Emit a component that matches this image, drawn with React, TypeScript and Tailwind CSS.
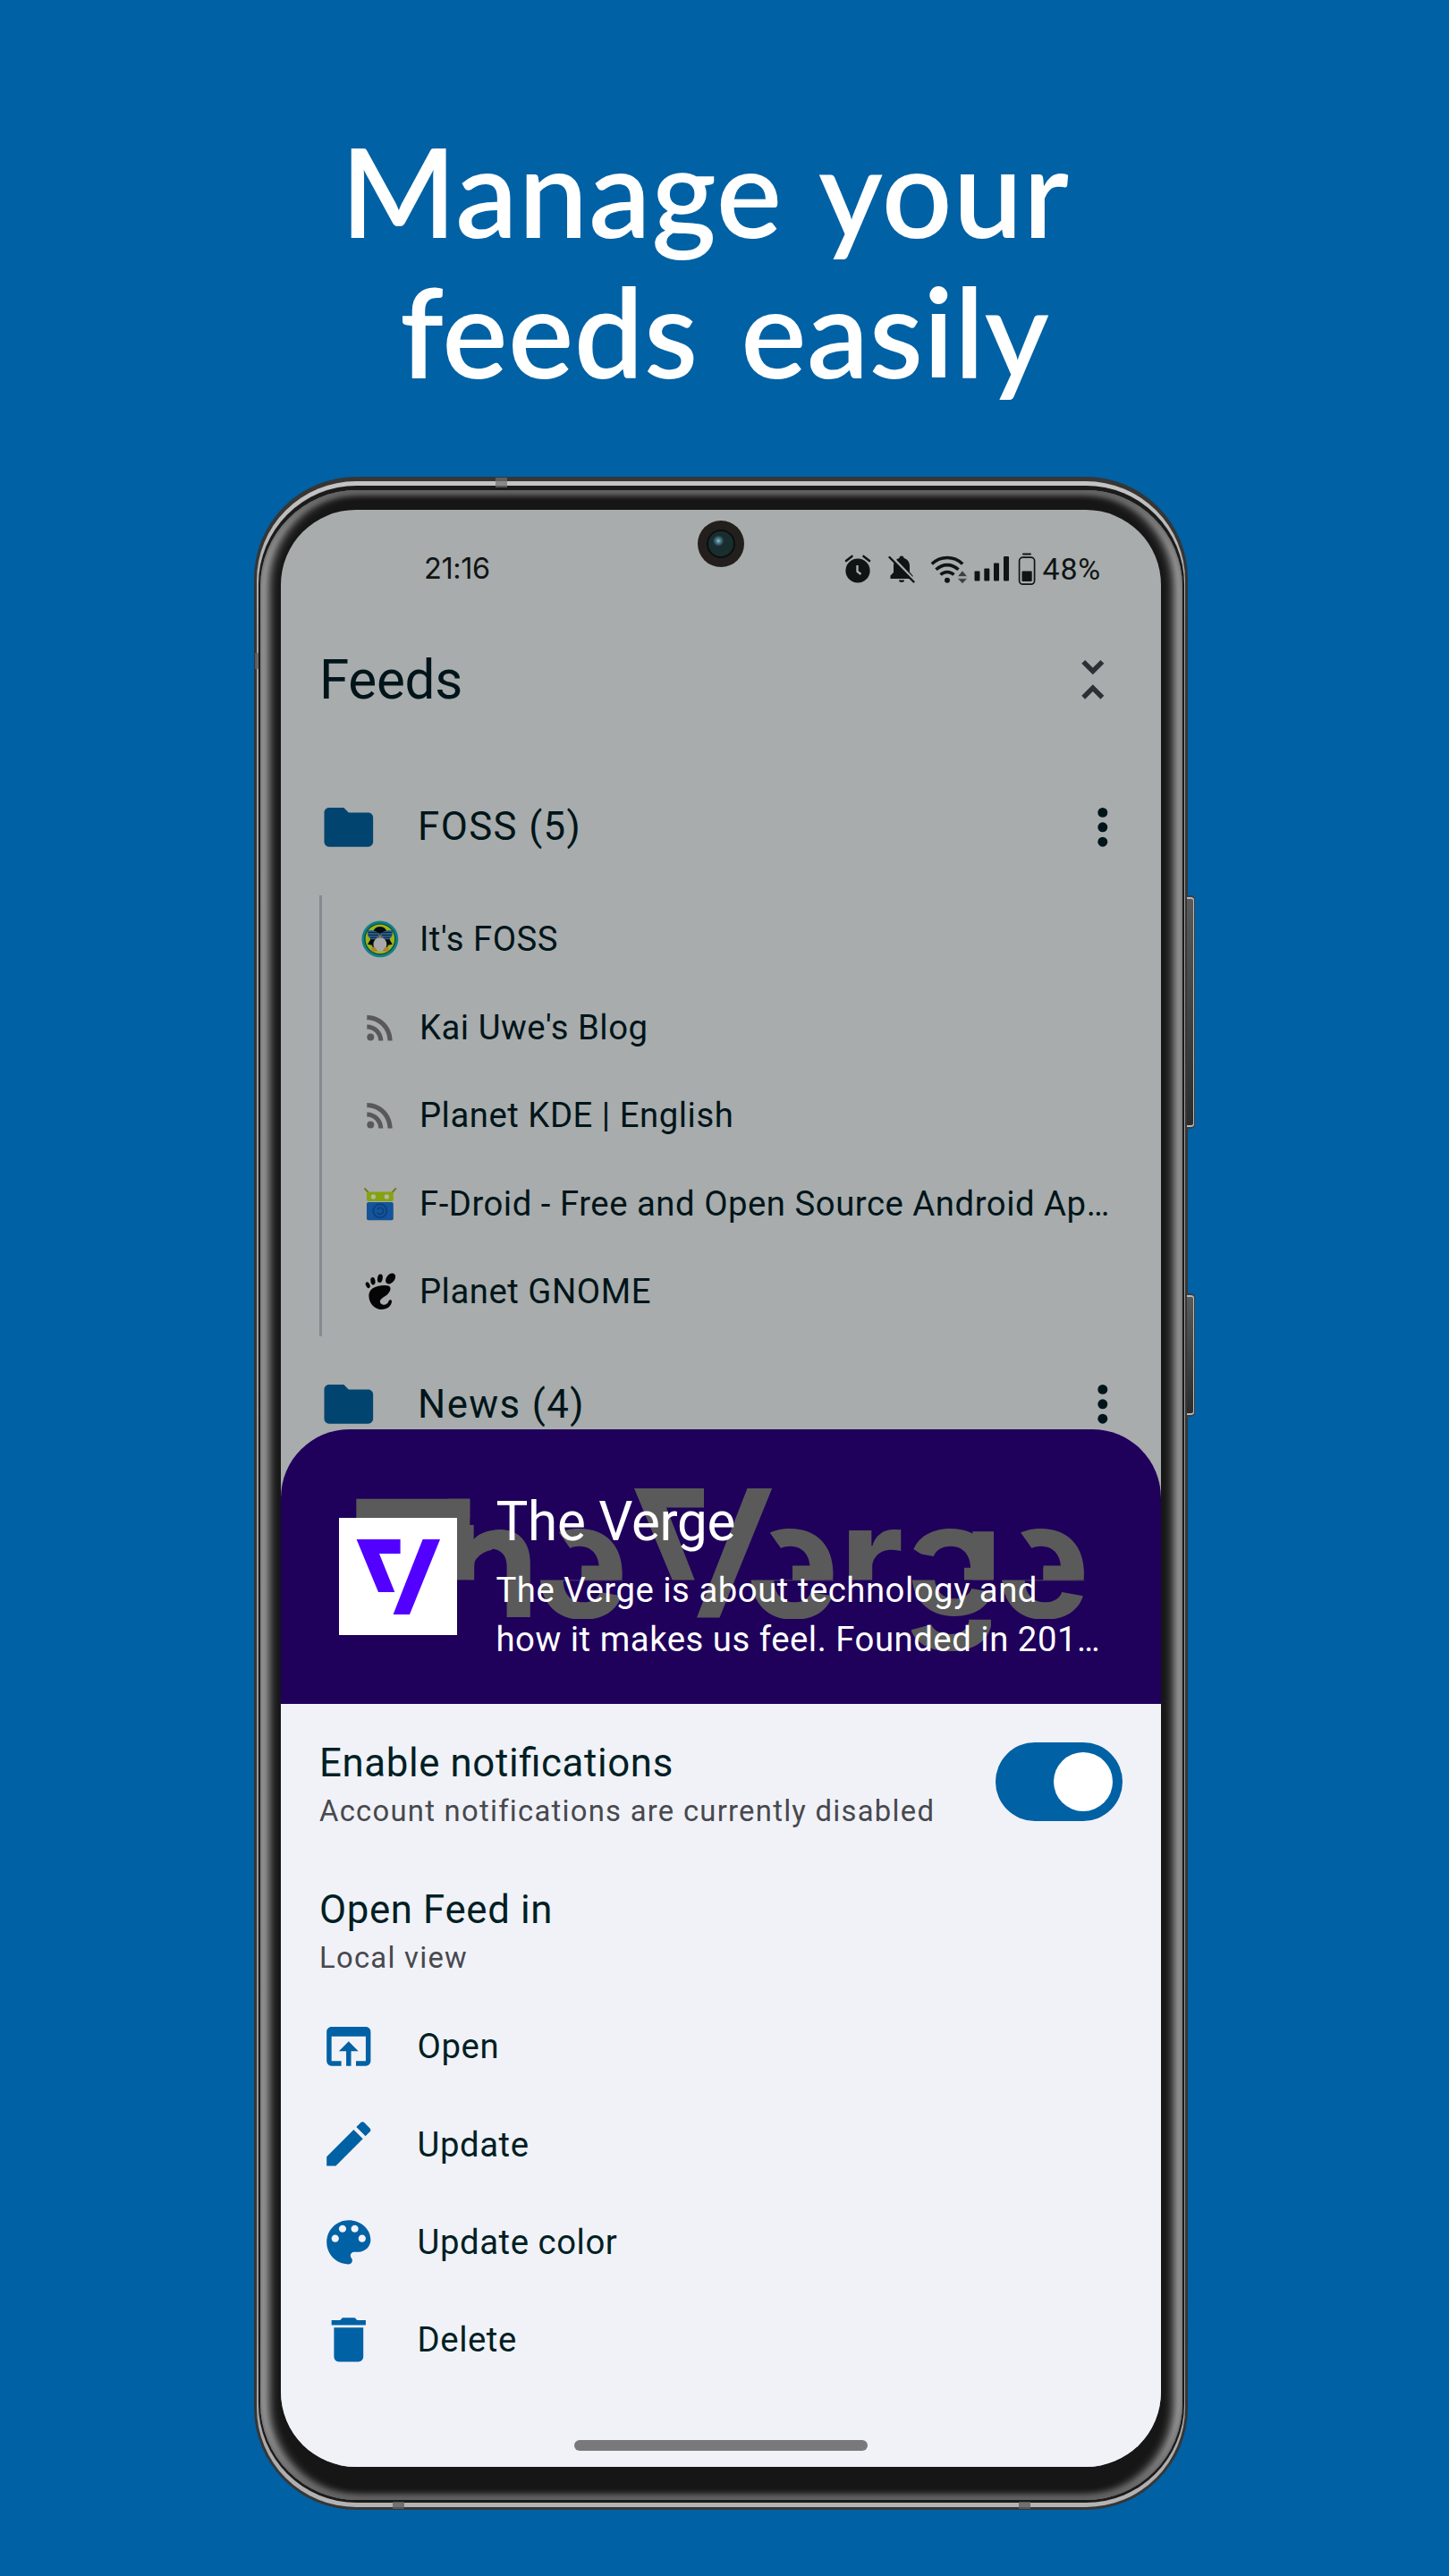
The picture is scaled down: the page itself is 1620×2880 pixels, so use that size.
import type { ReactNode } from "react";

const INK_DIM = "text-[#00151a]";

function Svg({ size, children, className = "" }: { size: number; children: ReactNode; className?: string }) {
  return (
    <svg width={size} height={size} viewBox="0 0 24 24" fill="currentColor" className={`shrink-0 ${className}`}>
      {children}
    </svg>
  );
}

function MoreVert() {
  return (
    <Svg size={65.6} className="text-[#00151a]">
      <circle cx="12" cy="6" r="2" />
      <circle cx="12" cy="12" r="2" />
      <circle cx="12" cy="18" r="2" />
    </Svg>
  );
}

function FolderRow({ title }: { title: string }) {
  return (
    <div className="flex h-[153px] shrink-0 items-center pl-[43px] pr-[32px]">
      <Svg size={65.6} className="text-[#00446f]">
        <path d="M10 4H4c-1.1 0-1.99.9-1.99 2L2 18c0 1.1.9 2 2 2h16c1.1 0 2-.9 2-2V8c0-1.1-.9-2-2-2h-8l-2-2z" />
      </Svg>
      <span className={`ml-[44.5px] flex-1 pt-[1px] text-[43.75px] leading-none tracking-[1.4px] ${INK_DIM}`}>{title}</span>
      <MoreVert />
    </div>
  );
}

function RssIcon() {
  return (
    <Svg size={43.75} className="text-[#595959]">
      <circle cx="6.18" cy="17.82" r="2.18" />
      <path d="M4 4.44v2.83c7.03 0 12.73 5.7 12.73 12.73h2.83c0-8.59-6.97-15.56-15.56-15.56zm0 5.66v2.83c3.9 0 7.07 3.17 7.07 7.07h2.83c0-5.47-4.43-9.9-9.9-9.9z" />
    </Svg>
  );
}

function ItsFossIcon() {
  return (
    <svg width="43.75" height="43.75" viewBox="0 0 44 44" className="shrink-0">
      <circle cx="22" cy="22" r="20.5" fill="#117f86" />
      <circle cx="22" cy="22" r="17.6" fill="#0b4038" />
      <circle cx="22" cy="22" r="16.4" fill="#9ab51b" />
      <path d="M22 8c6 0 8 5 9 10 1.500 5 4 8 5 10l-5 1-2 6H15l-2-6-5-1c1-2 3.500-5 5-10 1-5 3-10 9-10z" fill="#080b0e" />
      <path d="M8 12.500c5-1 10 .5 14 3.500 4-3 9-4.500 14-3.500 1 6-2 10-6.500 10-4 0-6-2-7.500-5-1.500 3-3.500 5-7.500 5C10 22.500 7 18.500 8 12.500z" fill="#2c5f8c" />
      <path d="M9 14.500h11M9 17.500h11M11 20.300h7M24 14.500h11M24 17.500h11M26 20.300h7" stroke="#0c2238" strokeWidth="1" />
      <ellipse cx="22" cy="28" rx="7.500" ry="8" fill="#a9a9ab" />
      <path d="M20 18h4l-2 3.500z" fill="#b0742a" />
      <circle cx="15" cy="33.500" r="2.700" fill="#b9802f" />
      <circle cx="29" cy="33.500" r="2.700" fill="#b9802f" />
    </svg>
  );
}

function FDroidIcon() {
  return (
    <svg width="43.75" height="43.75" viewBox="0 0 44 44" className="shrink-0">
      <rect x="1" y="1" width="42" height="42" fill="#aaabab" />
      <path d="M5 5l4 4.500M39.500 5l-4 4.500" stroke="#68801d" strokeWidth="2" strokeLinecap="round" />
      <rect x="7" y="8.500" width="30" height="10.500" rx="2" fill="#84a30f" />
      <circle cx="14.500" cy="14" r="2.600" fill="#b4b8a6" />
      <circle cx="29.500" cy="14" r="2.600" fill="#b4b8a6" />
      <rect x="7" y="20" width="30" height="20.500" rx="2" fill="#14549a" />
      <circle cx="22" cy="30" r="7.600" fill="none" stroke="#0d3f7a" strokeWidth="1.700" />
      <path d="M19 28.200a3.600 3.600 0 1 1 0 3.600" fill="none" stroke="#0d3f7a" strokeWidth="1.700" />
    </svg>
  );
}

function GnomeIcon() {
  return (
    <svg width="43.75" height="43.75" viewBox="0 0 44 44" className="shrink-0" fill="#050505">
      <ellipse cx="33.800" cy="7.500" rx="4.600" ry="6.800" transform="rotate(38 33.800 7.500)" />
      <ellipse cx="22" cy="7.200" rx="2.900" ry="4.800" transform="rotate(10 22 7.200)" />
      <ellipse cx="14" cy="10.200" rx="2.600" ry="4.300" transform="rotate(-8 14 10.200)" />
      <ellipse cx="8.300" cy="14.800" rx="2.200" ry="3.600" transform="rotate(-24 8.300 14.800)" />
      <path d="M33.500 17.500c-1-3-8-3-14-1.500C12.500 17.500 9 22 9.500 28c.6 8 6.500 14.300 14 14.300 6.500 0 11.500-3.800 11.700-9.300.1-2-2.700-2.300-3.400-.4-.8 2.800-3.200 4.600-6 4.300-3-.3-4.700-3.200-3.300-5.500 1.300-2 4-3 6.500-5 3-2.500 5.400-6 4.500-8.900z" />
    </svg>
  );
}

const feeds: { name: string; icon: ReactNode }[] = [
  { name: "It's FOSS", icon: <ItsFossIcon /> },
  { name: "Kai Uwe's Blog", icon: <RssIcon /> },
  { name: "Planet KDE | English", icon: <RssIcon /> },
  { name: "F-Droid - Free and Open Source Android Ap…", icon: <FDroidIcon /> },
  { name: "Planet GNOME", icon: <GnomeIcon /> },
];

function StatusBar() {
  return (
    <div className="flex h-[132px] shrink-0 items-center pl-[160px] text-[#101414]">
      <span className="w-[470px] font-[Inter] text-[32.5px] leading-none tracking-[-0.4px]">21:16</span>
      <svg width="30" height="32" viewBox="0 0 30 32" className="shrink-0" fill="currentColor">
        <circle cx="15" cy="18" r="13.600" />
        <path d="M2 7l6.500-5M28 7l-6.500-5" stroke="currentColor" strokeWidth="2.600" strokeLinecap="round" />
        <path d="M14.500 12v7l4 3" stroke="#a8acac" strokeWidth="2.400" fill="none" />
      </svg>
      <svg width="30" height="32" viewBox="0 0 30 32" className="ml-[19px] shrink-0" fill="currentColor">
        <path d="M12.500 4a2.500 2.500 0 0 1 5 0c4.300 1.200 6.500 4.500 6.500 9v6.500l3.500 4V27H2.500v-3.500L6 20v-7c0-4.500 2.200-7.800 6.500-9z" />
        <path d="M12 28.500h6a3 2.500 0 0 1-6 0z" />
        <path d="M2.500 1.500l27.500 28.500" stroke="#a8acac" strokeWidth="3.500" />
        <path d="M1.500 3l27 27.500" stroke="currentColor" strokeWidth="2.400" strokeLinecap="round" />
      </svg>
      <svg width="42" height="33" viewBox="0 0 42 33" className="ml-[17px] shrink-0" fill="none" stroke="currentColor">
        <path d="M1.800 10.500c10-9.300 24.500-9.300 34.400 0M6.500 16.800c7.500-6.900 17.500-6.900 25 0" strokeWidth="3.600" />
        <path d="M11.500 22.500c4.500-4.100 10.500-4.100 15 0" strokeWidth="3.600" />
        <circle cx="19" cy="28.800" r="3" fill="currentColor" stroke="none" />
        <path d="M30.500 24.500l5.500-6.500 5.500 6.500zM30.500 26.800l5.500 5.700 5.500-5.700z" fill="#3c4040" stroke="#a8acac" strokeWidth="0.600" />
      </svg>
      <svg width="40" height="30" viewBox="0 0 40 30" className="ml-[7px] shrink-0" fill="currentColor">
        <rect x="0.500" y="17.500" width="6" height="11" rx="1" />
        <rect x="11.300" y="14.500" width="6" height="14" rx="1" />
        <rect x="22" y="8.500" width="6" height="20" rx="1" />
        <rect x="33" y="1" width="6" height="27.500" rx="1" />
      </svg>
      <svg width="20" height="37" viewBox="0 0 20 37" className="ml-[9px] shrink-0" fill="currentColor">
        <rect x="5" y="0.500" width="10" height="2" rx="1" />
        <rect x="1.600" y="5.200" width="17" height="30" rx="4" fill="none" stroke="currentColor" strokeWidth="1.700" />
        <rect x="4.500" y="20.500" width="11.200" height="11.500" rx="1" />
      </svg>
      <span className="ml-[7.5px] text-[34px] leading-none tracking-[0.8px]">48%</span>
    </div>
  );
}

/** Letter whose upper half is turned upside down, as in the wordmark. */
function SplitE({ x }: { x: number }) {
  return (
    <g transform={`translate(${x} 0)`}>
      <g clipPath="url(#upperE)">
        <text transform="translate(99.5 1711) rotate(180)">e</text>
      </g>
      <g clipPath="url(#lower)">
        <text x={-6.5} y={1809}>e</text>
      </g>
      <rect x={47} y="1750.700" width="35" height="16" />
    </g>
  );
}

function Wordmark() {
  return (
    <svg
      aria-hidden="true"
      viewBox="314 1598.300 984 306.700"
      className="absolute inset-0 h-full w-full font-[Inter] text-[178px] font-bold"
      fill="#5a5a5a"
    >
      <clipPath id="upper"><rect x="314" y="1598" width="984" height="168.700" /></clipPath>
      <clipPath id="upperE"><path d="M12 1700L24 1717L35.300 1733L47 1750.700V1766.700H110V1700z" /></clipPath>
      <clipPath id="upperG"><path d="M1000 1690H1115V1766.700H1078V1745H1041L1021 1732H1000z" /></clipPath>
      <clipPath id="lower"><rect x="-20" y="1766.700" width="130" height="43.500" /></clipPath>
      <clipPath id="lowerG"><rect x="1000" y="1766.700" width="120" height="41" /></clipPath>
      <clipPath id="tail"><rect x="1000" y="1811" width="108" height="60" /></clipPath>
      <clipPath id="arch"><path d="M525 1705V1766.700H560V1820H600V1705z" /></clipPath>
      <rect x="398.300" y="1676" width="127" height="22" />
      <rect x="501" y="1676" width="24.300" height="90.700" />
      <g clipPath="url(#arch)">
        <text x="493" y="1808.700">h</text>
      </g>
      <path d="M525 1727Q534 1713 550 1711.500V1733Q527 1737 525 1766.700z" />
      <SplitE x={603.3} />
      <path d="M709 1664.300H787V1685.700H745L776.700 1766.700H751.700z" />
      <path d="M835.500 1664.300H863.200L804.500 1808.700H779z" />
      <SplitE x={839} />
      <g clipPath="url(#upper)">
        <text x="938" y="1808.700">r</text>
      </g>
      <g clipPath="url(#upperG)">
        <text transform="translate(1118 1711) rotate(180)">e</text>
      </g>
      <rect x="1087.400" y="1712.500" width="23.600" height="54.200" />
      <g clipPath="url(#lowerG)">
        <text x="1012" y="1805">e</text>
      </g>
      <g clipPath="url(#tail)">
        <text x="1008" y="1808">g</text>
      </g>
      <SplitE x={1119.5} />
    </svg>
  );
}

function SheetHeader() {
  return (
    <div className="relative flex h-[306.7px] shrink-0 items-center bg-[#1f005b] pl-[65px] text-white">
      <Wordmark />
      <div className="relative mt-[22px] size-[131.5px] shrink-0 bg-white">
        <svg viewBox="0 0 131.500 131.500" className="size-full" fill="#5200ff">
          <path d="M19.600 24H68.600V40H45L62.300 83H44z" />
          <path d="M93.600 24H113L79 108H60.600z" />
        </svg>
      </div>
      <div className="relative ml-[44px] mt-[10px] flex flex-col">
        <span className="text-[60.2px] leading-[99px] tracking-[-0.3px]">The Verge</span>
        <span className="whitespace-nowrap text-[38.3px] leading-[54.7px] tracking-[0.52px]">
          The Verge is about technology and
          <br />
          how it makes us feel. Founded in 201…
        </span>
      </div>
    </div>
  );
}

function Setting({ title, detail }: { title: string; detail: string }) {
  return (
    <div className="flex flex-col whitespace-nowrap">
      <span className="pt-[1.5px] text-[43.75px] leading-[64.1px] tracking-[0.64px] text-[#001f24] [font-feature-settings:'liga'_1]">
        {title}
      </span>
      <span className="pt-[1.5px] text-[32.8px] leading-[42.25px] tracking-[1.26px] text-[#47494e]">{detail}</span>
    </div>
  );
}

const actions = [
  {
    label: "Open",
    path: "M19 4H5c-1.110 0-2 .9-2 2v12c0 1.100.89 2 2 2h4v-2H5V8h14v10h-4v2h4c1.100 0 2-.9 2-2V6c0-1.100-.89-2-2-2zm-7 6l-4 4h3v6h2v-6h3l-4-4z",
  },
  {
    label: "Update",
    path: "M3 17.250V21h3.750L17.810 9.940l-3.750-3.750L3 17.250zM20.710 7.040c.39-.39.39-1.020 0-1.410l-2.340-2.340c-.39-.39-1.020-.39-1.410 0l-1.830 1.830 3.750 3.750 1.830-1.830z",
  },
  {
    label: "Update color",
    path: "M12 3c-4.970 0-9 4.030-9 9s4.030 9 9 9c.83 0 1.500-.67 1.500-1.500 0-.39-.15-.74-.39-1.010-.23-.26-.38-.61-.38-.99 0-.83.67-1.500 1.500-1.500H16c2.760 0 5-2.240 5-5 0-4.420-4.030-8-9-8zm-5.500 9c-.83 0-1.500-.67-1.500-1.500S5.670 9 6.500 9 8 9.670 8 10.500 7.330 12 6.500 12zm3-4C8.670 8 8 7.330 8 6.500S8.670 5 9.500 5s1.500.67 1.500 1.500S10.330 8 9.500 8zm5 0c-.83 0-1.500-.67-1.500-1.500S13.670 5 14.500 5s1.500.67 1.500 1.500S15.330 8 14.500 8zm3 4c-.83 0-1.500-.67-1.500-1.500S16.670 9 17.500 9s1.500.67 1.500 1.500-.67 1.500-1.500 1.500z",
  },
  {
    label: "Delete",
    path: "M6 19c0 1.100.9 2 2 2h8c1.100 0 2-.9 2-2V7H6v12zM19 4h-3.500l-1-1h-5l-1 1H5v2h14V4z",
  },
];

function BottomSheet() {
  return (
    <div className="absolute inset-x-0 bottom-0 flex h-[1159.7px] flex-col overflow-hidden rounded-t-[76.5px] bg-[#f1f2f8]">
      <SheetHeader />
      <div className="mt-[32.3px] flex items-center justify-between px-[43px]">
        <Setting title="Enable notifications" detail="Account notifications are currently disabled" />
        <div className="flex h-[87.5px] w-[142.2px] items-center justify-end rounded-full bg-[#0061a4] pr-[11px]">
          <div className="size-[65.6px] rounded-full bg-white" />
        </div>
      </div>
      <div className="mt-[54.7px] px-[43px]">
        <Setting title="Open Feed in" detail="Local view" />
      </div>
      <div className="mt-[22.4px] flex flex-col">
        {actions.map((a) => (
          <div key={a.label} className="flex h-[109.4px] items-center px-[43px]">
            <Svg size={65.6} className="text-[#0061a4]">
              <path d={a.path} />
            </Svg>
            <span className="ml-[44px] pt-[1px] text-[38.3px] leading-none tracking-[0.55px] text-[#001f24]">{a.label}</span>
          </div>
        ))}
      </div>
      <div className="mx-auto mt-[57.5px] h-[11.5px] w-[328px] shrink-0 rounded-full bg-[#79797c]" />
    </div>
  );
}

function Screen() {
  return (
    <div className="relative flex h-full flex-col overflow-hidden rounded-[84px] bg-[#a8acac]">
      <StatusBar />
      <div className="absolute left-[466px] top-[12px] flex size-[52px] items-center justify-center rounded-full bg-[#231f1d]">
        <div className="size-[32px] rounded-full border-2 border-[#0d0e0f] bg-[radial-gradient(circle_at_40%_38%,#8fc4d8_0,#4d7f90_10%,#1a2c30_26%,#17302d_70%,#111_100%)]" />
      </div>
      <div className="flex h-[116px] shrink-0 items-center justify-between px-[43px]">
        <span className={`pt-[2px] text-[60.2px] leading-none tracking-[-0.3px] ${INK_DIM}`}>Feeds</span>
        <Svg size={65.6} className="text-[#2c3036]">
          <path d="M7.410 18.590L8.830 20 12 16.830 15.170 20l1.410-1.410L12 14l-4.590 4.590zm9.180-13.180L15.170 4 12 7.170 8.830 4 7.410 5.410 12 10l4.590-4.590z" />
        </Svg>
      </div>
      <div className="mt-[30px] shrink-0">
        <FolderRow title="FOSS (5)" />
      </div>
      <div className="ml-[43px] flex shrink-0 flex-col border-l-[3px] border-[#868a90]">
        {feeds.map((f) => (
          <div key={f.name} className="flex h-[98.5px] items-center pl-[43.2px]">
            {f.icon}
            <span className={`ml-[22px] whitespace-nowrap text-[38.3px] leading-none tracking-[0.52px] ${INK_DIM}`}>
              {f.name}
            </span>
          </div>
        ))}
      </div>
      <FolderRow title="News (4)" />
      <BottomSheet />
    </div>
  );
}

function SideButton({ className }: { className: string }) {
  return (
    <div className={`absolute w-[9px] rounded-r-[5px] border-y-2 border-r border-[#3c3c3c] bg-[#b8b8b8] py-[2px] pr-[1.5px] ${className}`}>
      <div className="h-full w-full rounded-r-[2px] bg-linear-to-b from-[#5a5a5a] to-[#2c2c2c]" />
    </div>
  );
}

function Phone() {
  return (
    <div className="relative ml-[284px] h-[2273px] w-[1044px]">
      <SideButton className="left-[1043px] top-[468px] h-[261px]" />
      <SideButton className="left-[1043px] top-[913px] h-[138px]" />
      <div className="h-full rounded-[114px] bg-[#363636] px-[3px] pb-[3px] pt-[5px]">
        <div className="h-full rounded-[111px] bg-[linear-gradient(180deg,#c4c4c4_0,#a0a0a0_8%,#949494_90%,#b4b4b4_100%)] px-[1.5px] pb-[5px] pt-[5px]">
          <div className="h-full rounded-[110px] bg-[#1b1b1b] px-[2px] pb-[3px] pt-[4.5px]">
            <div className="h-full rounded-[108px] bg-[#161616] px-[23.5px] pb-[37px] pt-[22.5px] shadow-[inset_0_5px_7px_-1px_#5c5c5c,inset_0_-6px_8px_-1px_#5c5c5c,inset_10px_0_12px_-1px_#b8b8b8,inset_-10px_0_12px_-1px_#b8b8b8]">
              <Screen />
            </div>
          </div>
        </div>
      </div>
      <div className="absolute left-[270px] top-px h-[11px] w-[13px] bg-[#707070]/70" />
      <div className="absolute bottom-px left-[155px] h-[8px] w-[13px] bg-[#606060]/80" />
      <div className="absolute bottom-px left-[855px] h-[8px] w-[13px] bg-[#606060]/80" />
      <div className="absolute left-px top-[197px] h-[18px] w-[4px] bg-[#606060]/80" />
    </div>
  );
}

export default function App() {
  return (
    <div className="h-[2880px] w-[1620px] overflow-hidden bg-[#0061a4] pt-[134px] font-[Roboto,sans-serif]">
      <h1 className="h-[399px] whitespace-nowrap font-[Lato,sans-serif] text-[138px] font-semibold leading-[157px] text-white">
        <span className="ml-[381px] block tracking-[1px] [word-spacing:8px]">Manage your</span>
        <span className="ml-[447px] block tracking-[0.4px] [word-spacing:13px]">feeds easily</span>
      </h1>
      <Phone />
    </div>
  );
}
